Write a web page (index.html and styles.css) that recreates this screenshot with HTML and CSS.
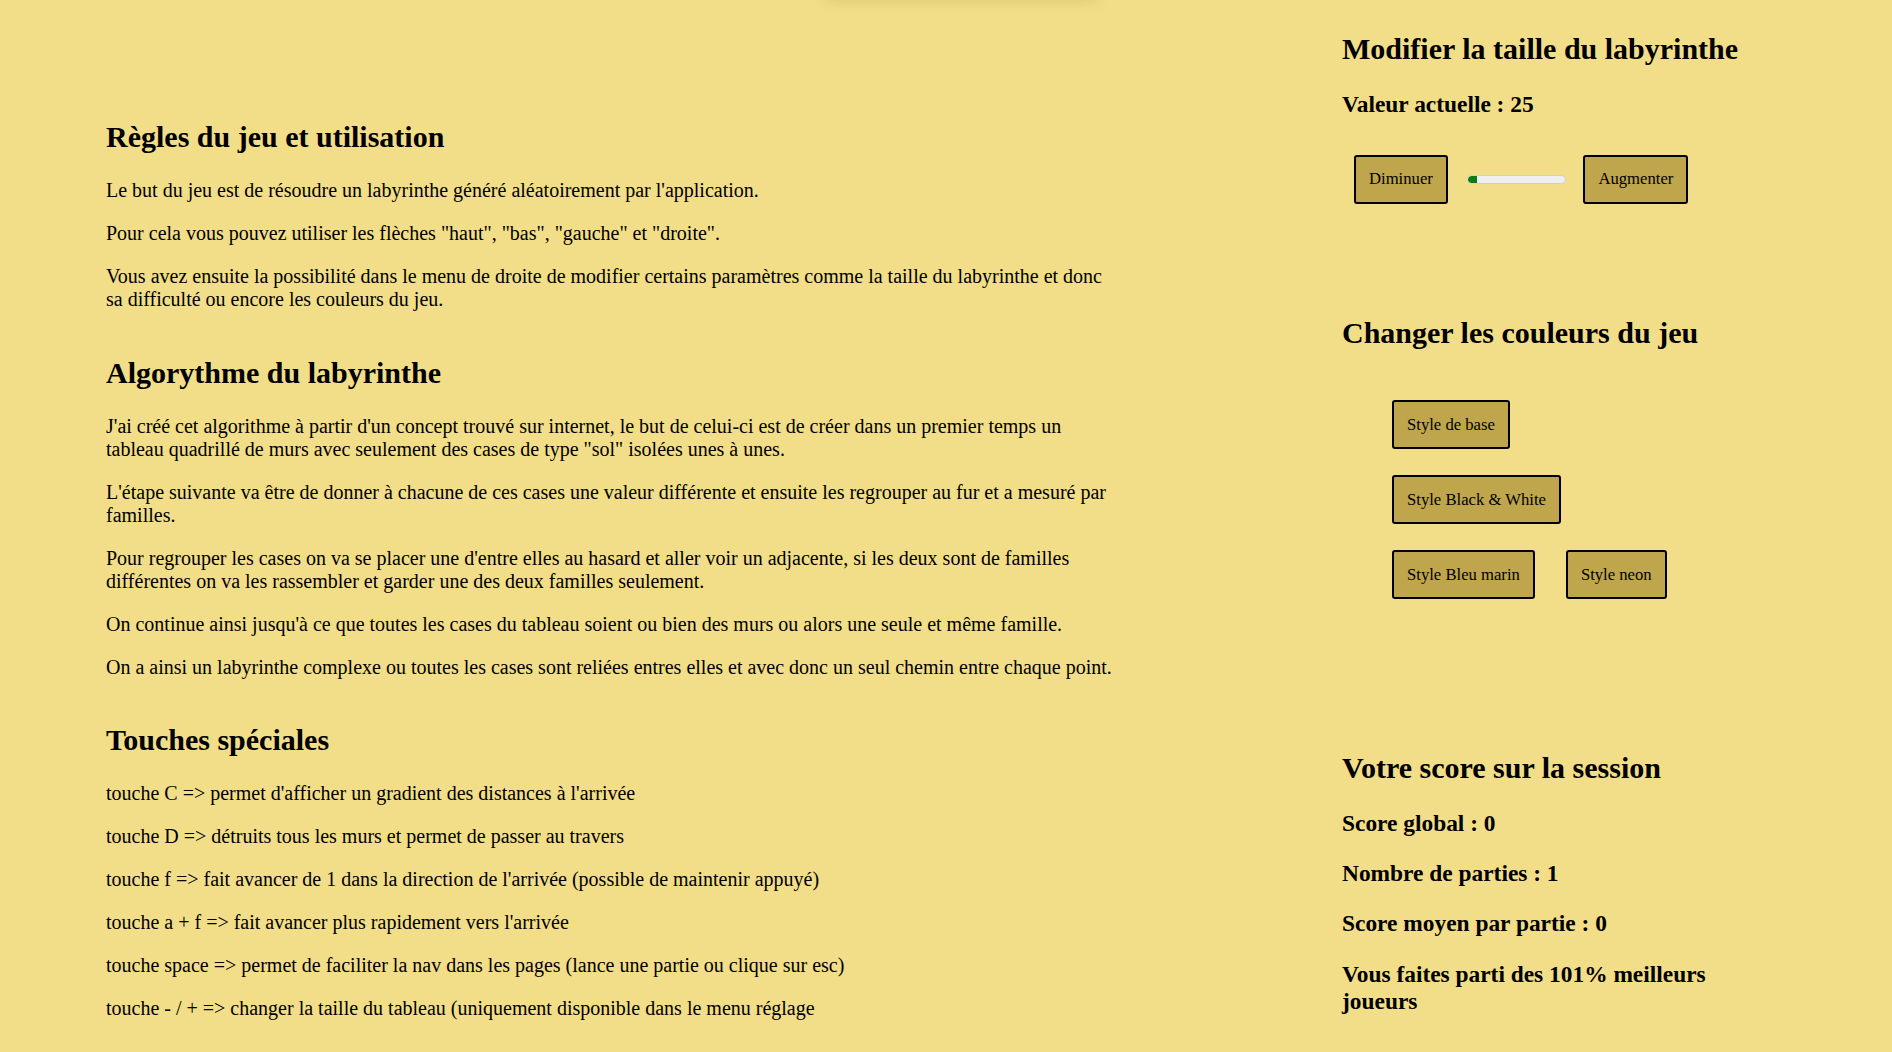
FILE: index.html
```html
<!DOCTYPE html>
<html lang="fr">
<head>
<meta charset="utf-8">
<title>Labyrinthe</title>
<link rel="stylesheet" href="styles.css">
</head>
<body>
<div class="top-shadow"></div>
<main class="page">
  <div class="left">
    <section class="block">
      <h2>Règles du jeu et utilisation</h2>
      <p>Le but du jeu est de résoudre un labyrinthe généré aléatoirement par l'application.</p>
      <p>Pour cela vous pouvez utiliser les flèches "haut", "bas", "gauche" et "droite".</p>
      <p>Vous avez ensuite la possibilité dans le menu de droite de modifier certains paramètres comme la taille du labyrinthe et donc sa difficulté ou encore les couleurs du jeu.</p>
    </section>
    <section class="block">
      <h2>Algorythme du labyrinthe</h2>
      <p>J'ai créé cet algorithme à partir d'un concept trouvé sur internet, le but de celui-ci est de créer dans un premier temps un tableau quadrillé de murs avec seulement des cases de type "sol" isolées unes à unes.</p>
      <p>L'étape suivante va être de donner à chacune de ces cases une valeur différente et ensuite les regrouper au fur et a mesuré par familles.</p>
      <p>Pour regrouper les cases on va se placer une d'entre elles au hasard et aller voir un adjacente, si les deux sont de familles différentes on va les rassembler et garder une des deux familles seulement.</p>
      <p>On continue ainsi jusqu'à ce que toutes les cases du tableau soient ou bien des murs ou alors une seule et même famille.</p>
      <p>On a ainsi un labyrinthe complexe ou toutes les cases sont reliées entres elles et avec donc un seul chemin entre chaque point.</p>
    </section>
    <section class="block">
      <h2>Touches spéciales</h2>
      <p>touche C =&gt; permet d'afficher un gradient des distances à l'arrivée</p>
      <p>touche D =&gt; détruits tous les murs et permet de passer au travers</p>
      <p>touche f =&gt; fait avancer de 1 dans la direction de l'arrivée (possible de maintenir appuyé)</p>
      <p>touche a + f =&gt; fait avancer plus rapidement vers l'arrivée</p>
      <p>touche space =&gt; permet de faciliter la nav dans les pages (lance une partie ou clique sur esc)</p>
      <p>touche - / + =&gt; changer la taille du tableau (uniquement disponible dans le menu réglage</p>
    </section>
  </div>
  <aside class="right">
    <section class="panel panel-size">
      <h2>Modifier la taille du labyrinthe</h2>
      <h3>Valeur actuelle : 25</h3>
      <div class="size-row">
        <button class="btn btn-dec">Diminuer</button>
        <div class="bar"><div class="bar-fill" style="width:9%"></div></div>
        <button class="btn btn-inc">Augmenter</button>
      </div>
    </section>
    <section class="panel panel-colors">
      <h2>Changer les couleurs du jeu</h2>
      <div class="colors">
        <div class="color-row"><button class="btn">Style de base</button></div>
        <div class="color-row"><button class="btn">Style Black &amp; White</button></div>
        <div class="color-row"><button class="btn">Style Bleu marin</button><button class="btn">Style neon</button></div>
      </div>
    </section>
    <section class="panel panel-score">
      <h2>Votre score sur la session</h2>
      <h3>Score global : 0</h3>
      <h3>Nombre de parties : 1</h3>
      <h3>Score moyen par partie : 0</h3>
      <h3>Vous faites parti des 101% meilleurs joueurs</h3>
    </section>
  </aside>
</main>
</body>
</html>
```
FILE: styles.css
```css
html, body {
  margin: 0;
  padding: 0;
}
body {
  background: #f2de88;
  color: #000;
  font-family: "Liberation Serif", "Times New Roman", serif;
  font-size: 20px;
  overflow: hidden;
}
.top-shadow {
  position: absolute;
  left: 826px;
  top: -40px;
  width: 270px;
  height: 40px;
  box-shadow: 0 1px 14px rgba(150, 120, 30, 0.22);
  background: #f2de88;
}
.page {
  display: flex;
  align-items: flex-start;
}
.left {
  display: flex;
  flex-direction: column;
  width: 1010px;
  margin-left: 106px;
  padding-top: 95px;
}
h2 {
  font-size: 30px;
  font-weight: bold;
  margin: 24.9px 0;
}
h3 {
  font-size: 23.4px;
  font-weight: bold;
  margin: 23.4px 0;
}
p {
  margin: 20px 0;
}
.right {
  display: flex;
  flex-direction: column;
  width: 420px;
  margin-left: 226px;
  padding-top: 7px;
}
.btn {
  font-family: "Liberation Serif", "Times New Roman", serif;
  font-size: 16.67px;
  color: #000;
  background: #bfa64c;
  border: 2px solid #000;
  border-radius: 3px;
  padding: 12.5px 13px;
  line-height: normal;
  cursor: pointer;
}
.size-row {
  display: flex;
  align-items: center;
  margin: 37px 0 0 12px;
}
.bar {
  width: 97px;
  height: 7px;
  margin: 0 17.6px 0 19px;
  background: #efefef;
  border: 1px solid #cfcfcf;
  border-radius: 5px;
  overflow: hidden;
}
.bar-fill {
  height: 100%;
  background: #107c10;
  border-radius: 4px 0 0 4px;
}
.panel-colors {
  margin-top: 87px;
}
.colors {
  display: flex;
  flex-direction: column;
  gap: 26px;
  padding: 25.7px 0 0 50px;
}
.color-row {
  display: flex;
  gap: 31px;
}
.panel-score {
  margin-top: 126.5px;
}
```
